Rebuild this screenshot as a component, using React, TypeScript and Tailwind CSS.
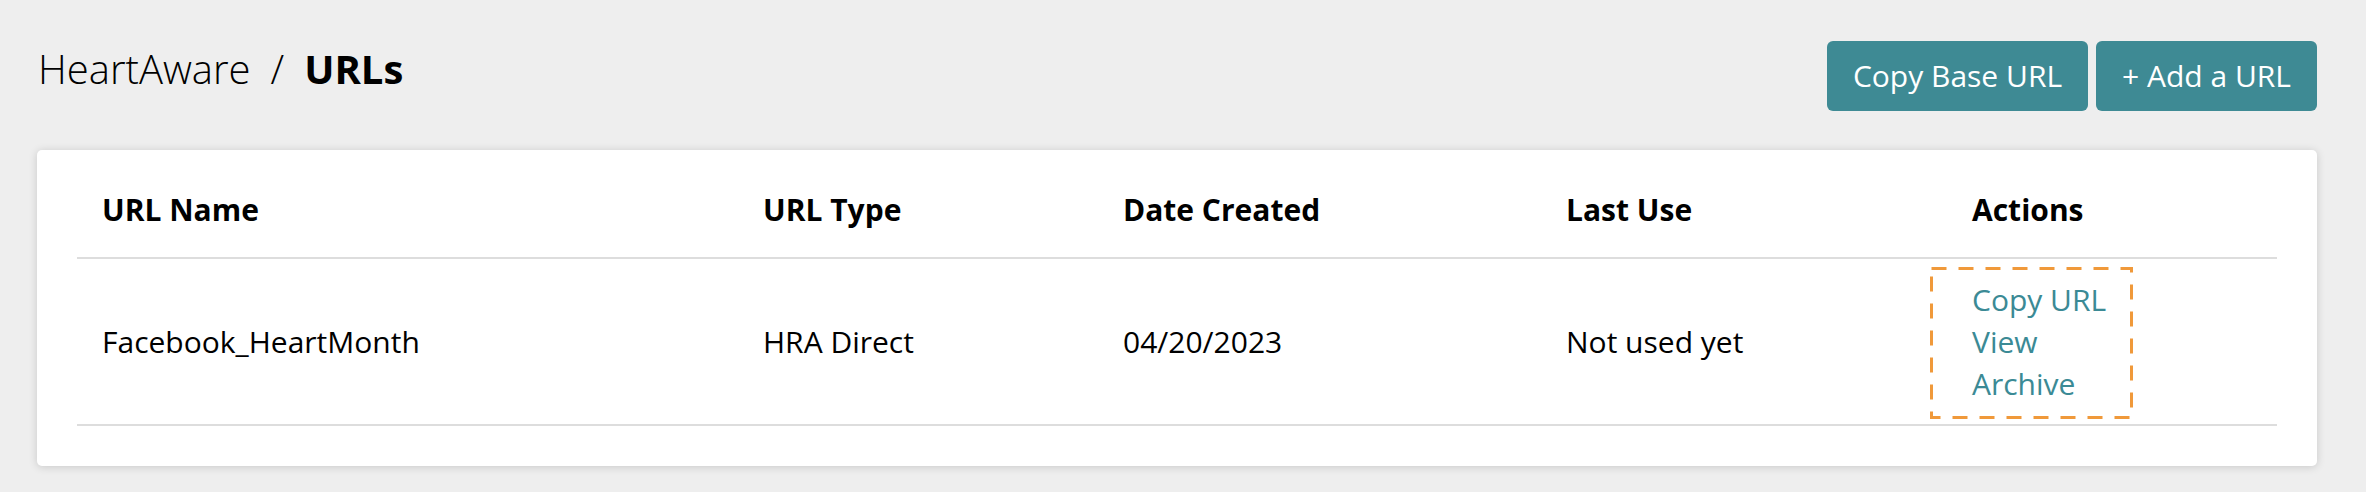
import React from 'react';

type UrlRow = {
  name: string;
  type: string;
  created: string;
  lastUse: string;
};

const rows: UrlRow[] = [
  { name: 'Facebook_HeartMonth', type: 'HRA Direct', created: '04/20/2023', lastUse: 'Not used yet' },
];

const cols = 'grid grid-cols-[661px_360px_443px_406px_1fr]';

function Highlight() {
  // dashed orange callout drawn around the action links
  return (
    <svg
      className="pointer-events-none absolute left-[-42px] top-[-12px]"
      width="203"
      height="152"
      viewBox="0 0 203 152"
    >
      <rect
        x="1.5"
        y="1.5"
        width="200"
        height="149"
        fill="none"
        stroke="#f0993a"
        strokeWidth="3"
        strokeDasharray="15 12"
      />
    </svg>
  );
}

export default function App() {
  return (
    <div
      className="min-h-screen bg-[#eeeeee] pl-[37px] pr-[49px] pt-[41px] text-black"
      style={{ fontFamily: '"Open Sans", "Liberation Sans", sans-serif' }}
    >
      <div className="flex items-start justify-between mb-[39px]">
        <h1 className="text-[40px] leading-[56px] pl-[1px]">
          <span className="font-light">HeartAware</span>
          <span className="font-light px-[20px]">/</span>
          <span className="font-bold">URLs</span>
        </h1>
        <div className="flex gap-[8px]">
          <button className="h-[70px] px-[26px] rounded-[6px] bg-[#3e8a94] text-white text-[30px] leading-[42px]">
            Copy Base URL
          </button>
          <button className="h-[70px] px-[26px] rounded-[6px] bg-[#3e8a94] text-white text-[30px] leading-[42px]">
            + Add a URL
          </button>
        </div>
      </div>

      <div className="bg-white rounded-[5px] shadow-[0_1px_9px_rgba(0,0,0,0.16)] px-[40px] pt-[39px] pb-[40px] text-[30px] leading-[42px]">
        <div className={`${cols} font-bold border-b-2 border-[#dddddd] pb-[26px]`}>
          <div className="pl-[25px]">URL Name</div>
          <div className="pl-[25px]">URL Type</div>
          <div className="pl-[25px]">Date Created</div>
          <div className="pl-[25px]">Last Use</div>
          <div className="pl-[25px]">Actions</div>
        </div>

        {rows.map((r) => (
          <div key={r.name} className={`${cols} items-center min-h-[167px] border-b-2 border-[#dddddd]`}>
            <div className="pl-[25px]">{r.name}</div>
            <div className="pl-[25px]">{r.type}</div>
            <div className="pl-[25px]">{r.created}</div>
            <div className="pl-[25px]">{r.lastUse}</div>
            <div className="pl-[25px]">
              <div className="relative inline-flex flex-col text-[#3b8a95]">
                <Highlight />
                <a href="#">Copy URL</a>
                <a href="#">View</a>
                <a href="#">Archive</a>
              </div>
            </div>
          </div>
        ))}
      </div>
    </div>
  );
}
